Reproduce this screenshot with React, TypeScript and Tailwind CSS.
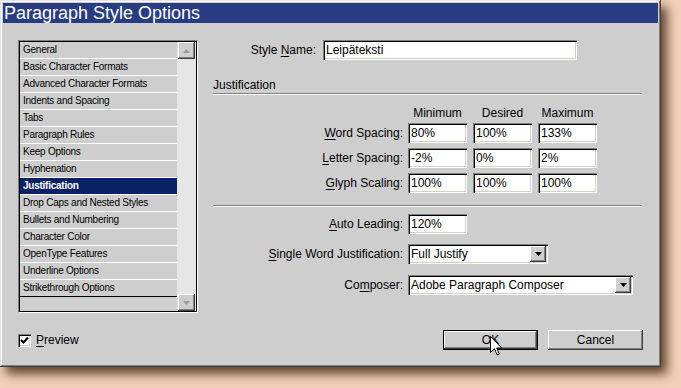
import React from "react";

const raised =
  "bg-[#cecece] shadow-[inset_-1px_-1px_0_#404040,inset_1px_1px_0_#ffffff,inset_-2px_-2px_0_#808080]";
const sunken =
  "bg-white shadow-[inset_1px_1px_0_#808080,inset_2px_2px_0_#000000,inset_-1px_-1px_0_#ffffff,inset_-2px_-2px_0_#d4d0c8]";

const items = [
  "General",
  "Basic Character Formats",
  "Advanced Character Formats",
  "Indents and Spacing",
  "Tabs",
  "Paragraph Rules",
  "Keep Options",
  "Hyphenation",
  "Justification",
  "Drop Caps and Nested Styles",
  "Bullets and Numbering",
  "Character Color",
  "OpenType Features",
  "Underline Options",
  "Strikethrough Options",
];

function Field({ value, w }: { value: string; w: string }) {
  return (
    <div className={`${sunken} ${w} h-[20px] flex items-center pl-[3px] text-[12px] leading-none`}>
      {value}
    </div>
  );
}

function Arrow({ up, color }: { up?: boolean; color: string }) {
  return (
    <svg width="7" height="4" viewBox="0 0 7 4">
      {up ? (
        <polygon points="3.5,0 7,4 0,4" fill={color} />
      ) : (
        <polygon points="0,0 7,0 3.5,4" fill={color} />
      )}
    </svg>
  );
}

function Select({ value, w }: { value: string; w: string }) {
  return (
    <div className={`${sunken} ${w} h-[20px] flex items-center text-[12px] leading-none`}>
      <div className="flex-1 pl-[3px]">{value}</div>
      <div className={`${raised} w-[16px] h-[16px] mr-[2px] flex items-center justify-center`}>
        <Arrow color="#000" />
      </div>
    </div>
  );
}

function Label({ pre, u, post, w }: { pre: string; u: string; post: string; w: string }) {
  return (
    <div className={`${w} text-right text-[12px] leading-[14px] whitespace-nowrap`}>
      {pre}
      <span className="underline underline-offset-[2px]">{u}</span>
      {post}
    </div>
  );
}

function Separator() {
  return <div className="h-[2px] w-[429px] border-t border-t-[#808080] border-b border-b-white" />;
}

export default function App() {
  return (
    <div className="w-[681px] h-[388px] bg-[#f1d2b9] overflow-hidden font-['Liberation_Sans',Arial,sans-serif] text-black">
      <div className="relative w-[661px] h-[367px] bg-[#cecece] flex flex-col shadow-[inset_-1px_-1px_0_#404040,inset_1px_1px_0_#e4e4e4,inset_-2px_-2px_0_#808080,inset_2px_2px_0_#ffffff,6px_7px_10px_rgba(70,40,20,0.85)]">
        {/* Title bar */}
        <div className="mx-[3px] mt-[3px] h-[20px] bg-[#283c84] text-white text-[18px] leading-[20px] pl-[1px] whitespace-nowrap">
          Paragraph Style Options
        </div>

        {/* Main area */}
        <div className="flex mt-[17px] ml-[18px] h-[273px]">
          {/* List box */}
          <div className="w-[180px] h-[273px] border border-t-[#808080] border-l-[#808080] border-b-white border-r-white">
            <div className="w-[178px] h-[271px] border border-black flex">
              <div className="w-[157px] flex flex-col">
                {items.map((it, i) => {
                  const sel = it === "Justification";
                  const last = i === items.length - 1;
                  return (
                    <div
                      key={it}
                      className={`h-[17px] border-b ${last ? "border-b-black" : "border-b-white"} ${
                        sel ? "bg-[#0b2165] text-white font-bold" : "bg-[#cecece]"
                      } pl-[3px] text-[10px] tracking-[-0.25px] leading-[16px] whitespace-nowrap`}
                    >
                      {it}
                    </div>
                  );
                })}
                <div className="flex-1 bg-[#cecece]" />
              </div>
              <div className="w-[19px] bg-[#e6e6e6] flex flex-col justify-between py-[0px] pl-[1px] pr-[1px]">
                <div className={`${raised} h-[17px] w-[17px] flex items-center justify-center`}>
                  <Arrow up color="#9a9a9a" />
                </div>
                <div className={`${raised} h-[17px] w-[17px] flex items-center justify-center`}>
                  <Arrow color="#9a9a9a" />
                </div>
              </div>
            </div>
          </div>

          {/* Right panel */}
          <div className="ml-[15px] w-[430px] flex flex-col">
            <div className="flex items-center h-[20px]">
              <Label pre="Style " u="N" post="ame:" w="w-[103px]" />
              <div className="ml-[7px]">
                <Field value="Leipäteksti" w="w-[254px]" />
              </div>
            </div>

            <div className="mt-[18px] h-[14px] text-[12px] leading-[14px]">Justification</div>
            <div className="mt-[1px]">
              <Separator />
            </div>

            <div className="mt-[11px] h-[14px] flex pl-[195px] gap-[6px] text-[12px] leading-[14px]">
              <div className="w-[59px] text-center">Minimum</div>
              <div className="w-[59px] text-center">Desired</div>
              <div className="w-[59px] text-center">Maximum</div>
            </div>

            <div className="mt-[3px] flex flex-col gap-[5px]">
              {[
                { pre: "", u: "W", post: "ord Spacing:", v: ["80%", "100%", "133%"] },
                { pre: "", u: "L", post: "etter Spacing:", v: ["-2%", "0%", "2%"] },
                { pre: "", u: "G", post: "lyph Scaling:", v: ["100%", "100%", "100%"] },
              ].map((r) => (
                <div key={r.post} className="flex items-center h-[20px]">
                  <Label pre={r.pre} u={r.u} post={r.post} w="w-[190px]" />
                  <div className="ml-[5px] flex gap-[6px]">
                    {r.v.map((v, i) => (
                      <Field key={i} value={v} w="w-[59px]" />
                    ))}
                  </div>
                </div>
              ))}
            </div>

            <div className="mt-[12px]">
              <Separator />
            </div>

            <div className="mt-[6px] flex items-center h-[21px]">
              <Label pre="" u="A" post="uto Leading:" w="w-[190px]" />
              <div className="ml-[5px]">
                <Field value="120%" w="w-[59px]" />
              </div>
            </div>

            <div className="mt-[10px] flex items-center h-[20px]">
              <Label pre="" u="S" post="ingle Word Justification:" w="w-[190px]" />
              <div className="ml-[5px]">
                <Select value="Full Justify" w="w-[140px]" />
              </div>
            </div>

            <div className="mt-[11px] flex items-center h-[20px]">
              <Label pre="Co" u="m" post="poser:" w="w-[190px]" />
              <div className="ml-[5px]">
                <Select value="Adobe Paragraph Composer" w="w-[225px]" />
              </div>
            </div>
          </div>
        </div>

        {/* Bottom row */}
        <div className="flex items-center mt-[17px] ml-[18px] mr-[18px] h-[20px]">
          <div className={`${sunken} w-[13px] h-[13px] flex items-center justify-center`}>
            <svg width="9" height="9" viewBox="0 0 9 9">
              <path d="M1 4 L3.5 6.5 L8 1.5" stroke="#000" strokeWidth="2" fill="none" />
            </svg>
          </div>
          <div className="ml-[5px] text-[12px] leading-[14px]">
            <span className="underline underline-offset-[2px]">P</span>review
          </div>
          <div className="ml-auto flex gap-[10px]">
            <div className="w-[95px] h-[20px] border border-black">
              <div className={`${raised} w-full h-full flex items-center justify-center text-[12px] leading-none`}>
                OK
              </div>
            </div>
            <div className={`${raised} w-[95px] h-[20px] flex items-center justify-center text-[12px] leading-none`}>
              Cancel
            </div>
          </div>
        </div>

        {/* Mouse cursor */}
        <svg
          className="absolute left-[490px] top-[336px]"
          width="13"
          height="21"
          viewBox="0 0 13 21"
        >
          <path
            d="M0.5 0.5 L0.5 16.5 L4.5 12.8 L7.2 19 L9.3 18 L6.7 12 L11.8 12 Z"
            fill="#fff"
            stroke="#000"
            strokeWidth="1"
            strokeLinejoin="miter"
          />
        </svg>
      </div>
    </div>
  );
}
